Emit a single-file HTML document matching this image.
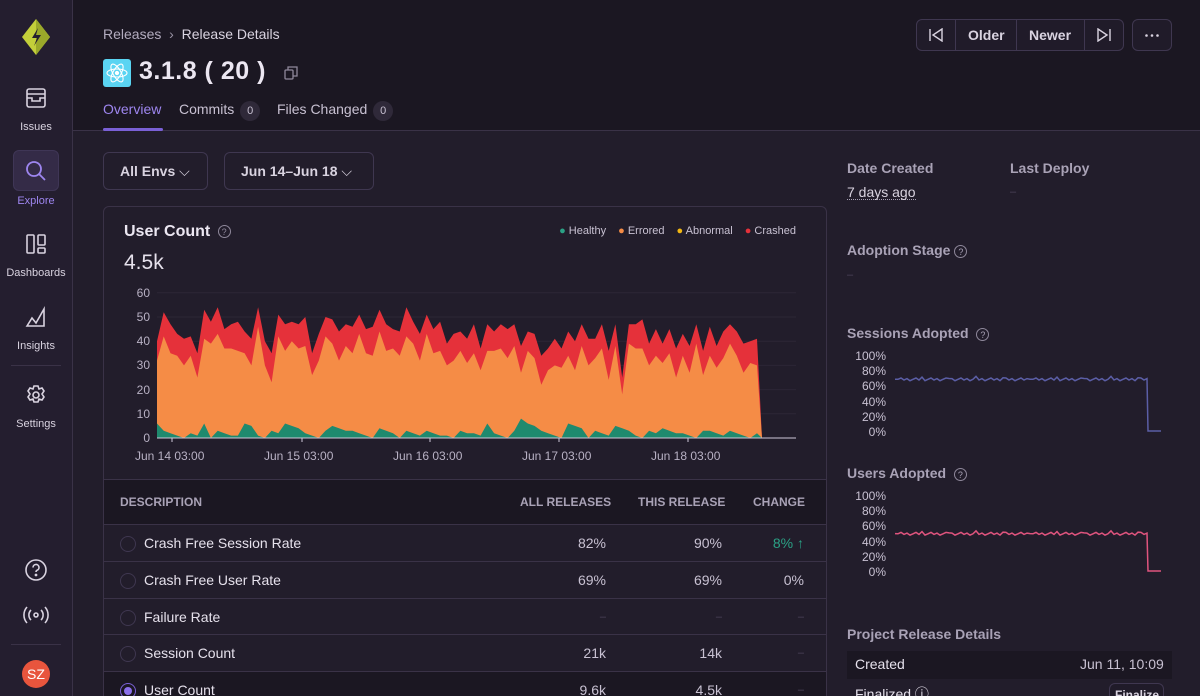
<!DOCTYPE html>
<html><head><meta charset="utf-8">
<style>
*{box-sizing:border-box;margin:0;padding:0}
html,body{width:1200px;height:696px;overflow:hidden}
body{background:#221d2b;font-family:"Liberation Sans",sans-serif;color:#e6e1ec;position:relative}
.sb{position:absolute;left:0;top:0;width:73px;height:696px;background:#241e2f;border-right:1px solid #3a3247}
.ni{position:absolute;left:0;width:72px;text-align:center;font-size:11px;color:#d9d3e0}
.ni svg{display:block;margin:0 auto 12px}
.hdr{position:absolute;left:73px;top:0;right:0;height:131px;background:#1b1722;border-bottom:1px solid #3a3247}
.abs{position:absolute}
.btn{position:absolute;border:1px solid #3f3750;border-radius:6px;background:#201b29}
.card{position:absolute;left:103px;top:206px;width:724px;height:500px;border:1px solid #3a3247;border-radius:6px;background:#221d2b;overflow:hidden}
.lbl{font-size:14px;font-weight:bold;color:#a9a2b6}
.row{position:absolute;left:0;width:722px;height:37px;border-top:1px solid #3a3247;font-size:14px}
.row .d{position:absolute;left:40px;top:10px;color:#e6e1ec}
.row .c{position:absolute;left:16px;top:11px;width:16px;height:16px;border:1px solid #3f3750;border-radius:50%}
.row .v{position:absolute;top:10px;text-align:right;color:#c8c1d2}
.row .dash{color:#4c445a;font-size:11px;top:12px}
.yl{position:absolute;font-size:12px;color:#b8b1c4;text-align:right;width:40px}
.lg{margin-left:12px}
</style></head><body>
<div class="sb">
 <svg class="abs" style="left:20px;top:18px" width="32" height="38" viewBox="0 0 32 38"><path d="M16 1 L30 19 L16 37 L2 19Z" fill="#c3cf3a"/><path d="M16 1 L30 19 L16 37Z" fill="#9aa82a"/><path d="M18 10 L12 20 L17 20 L14 28 L21 17 L16 17 Z" fill="#241e2f"/></svg>
 <div class="ni" style="top:87px"><svg width="22" height="22" viewBox="0 0 22 22" fill="none" stroke="#d9d3e0" stroke-width="1.6"><rect x="2" y="2" width="18" height="18" rx="2"/><path d="M2 7h18M2 11h5v3h8v-3h5"/></svg>Issues</div>
 <div class="abs" style="left:13px;top:150px;width:46px;height:41px;background:#342b47;border-radius:6px;border:1px solid #3f3656"></div>
 <div class="abs" style="left:0;top:160px;width:72px"><svg style="display:block;margin:0 auto" width="22" height="22" viewBox="0 0 22 22" fill="none" stroke="#9e86f0" stroke-width="1.8"><circle cx="9" cy="9" r="7"/><path d="M14 14l6 6"/></svg></div>
 <div class="ni" style="top:195px;color:#9e86f0">Explore</div>
 <div class="ni" style="top:233px"><svg width="22" height="22" viewBox="0 0 22 22" fill="none" stroke="#d9d3e0" stroke-width="1.6"><rect x="2" y="2" width="7" height="18" rx="1"/><rect x="13" y="2" width="7" height="10" rx="1"/><rect x="13" y="15" width="7" height="5" rx="1"/></svg>Dashboards</div>
 <div class="ni" style="top:306px"><svg width="22" height="22" viewBox="0 0 22 22" fill="none" stroke="#d9d3e0" stroke-width="1.6"><path d="M2 20l5-8 4 5 8-14v17z"/></svg>Insights</div>
 <div class="abs" style="left:11px;top:365px;width:50px;height:1px;background:#3a3247"></div>
 <div class="ni" style="top:384px"><svg width="22" height="22" viewBox="0 0 22 22" fill="none" stroke="#d9d3e0" stroke-width="1.6"><circle cx="11" cy="11" r="3"/><path d="M9 2h4l1 3 3-1 2 3-2 3 2 3-2 3-3-1-1 3H9l-1-3-3 1-2-3 2-3-2-3 2-3 3 1z"/></svg>Settings</div>
 <svg class="abs" style="left:24px;top:558px" width="24" height="24" viewBox="0 0 24 24" fill="none" stroke="#d9d3e0" stroke-width="1.6"><circle cx="12" cy="12" r="10"/><path d="M9 9.5a3 3 0 1 1 4 2.8c-.8.4-1 1-1 1.7"/><circle cx="12" cy="17" r=".6" fill="#d9d3e0"/></svg>
 <svg class="abs" style="left:23px;top:604px" width="26" height="22" viewBox="0 0 26 22" fill="none" stroke="#d9d3e0" stroke-width="1.6"><circle cx="13" cy="11" r="2"/><path d="M8 6a7 7 0 0 0 0 10M18 6a7 7 0 0 1 0 10M4 3a12 12 0 0 0 0 16M22 3a12 12 0 0 1 0 16"/></svg>
 <div class="abs" style="left:11px;top:644px;width:50px;height:1px;background:#3a3247"></div>
 <div class="abs" style="left:22px;top:660px;width:28px;height:28px;border-radius:50%;background:#e8553d;color:#fff;font-size:14px;text-align:center;line-height:28px">SZ</div>
</div>
<div class="hdr"></div>
<div class="abs" style="left:103px;top:26px;font-size:14px;color:#b3acbf">Releases &nbsp;<span style="color:#9a93a5">›</span>&nbsp; <span style="color:#d9d3e0">Release Details</span></div>
<div class="abs" style="left:103px;top:59px;width:28px;height:28px;background:#5ad4f2;border-radius:3px"><svg width="28" height="28" viewBox="0 0 28 28" fill="none" stroke="#fff" stroke-width="1.1"><ellipse cx="14" cy="14" rx="10" ry="4"/><ellipse cx="14" cy="14" rx="10" ry="4" transform="rotate(60 14 14)"/><ellipse cx="14" cy="14" rx="10" ry="4" transform="rotate(-60 14 14)"/><circle cx="14" cy="14" r="1.6" fill="#fff"/></svg></div>
<div class="abs" style="left:139px;top:57px;font-size:25px;font-weight:bold;color:#ece7f2;letter-spacing:.5px">3.1.8 ( 20 )</div>
<svg class="abs" style="left:284px;top:66px" width="14" height="14" viewBox="0 0 14 14" fill="none" stroke="#8f889b" stroke-width="1.3"><rect x="1" y="4" width="8" height="9" rx="1"/><path d="M4 4V1h9v9h-4"/></svg>
<div class="abs" style="left:103px;top:101px;font-size:14px;color:#9e86f0">Overview</div>
<div class="abs" style="left:103px;top:128px;width:60px;height:3px;background:#7a60d6;border-radius:2px"></div>
<div class="abs" style="left:179px;top:101px;font-size:14px;color:#c8c1d2">Commits <span style="display:inline-block;width:20px;height:20px;border-radius:10px;background:#2f2939;text-align:center;font-size:11px;line-height:20px;margin-left:2px">0</span></div>
<div class="abs" style="left:277px;top:101px;font-size:14px;color:#c8c1d2">Files Changed <span style="display:inline-block;width:20px;height:20px;border-radius:10px;background:#2f2939;text-align:center;font-size:11px;line-height:20px;margin-left:2px">0</span></div>
<div class="btn" style="left:916px;top:19px;width:208px;height:32px"></div>
<div class="abs" style="left:955px;top:20px;width:1px;height:30px;background:#3f3750"></div>
<div class="abs" style="left:1016px;top:20px;width:1px;height:30px;background:#3f3750"></div>
<div class="abs" style="left:1084px;top:20px;width:1px;height:30px;background:#3f3750"></div>
<svg class="abs" style="left:928px;top:28px" width="16" height="14" viewBox="0 0 16 14" fill="none" stroke="#d9d3e0" stroke-width="1.4"><path d="M2 1v12M14 1L5 7l9 6z"/></svg>
<div class="abs" style="left:968px;top:27px;font-size:14px;font-weight:bold;color:#d9d3e0">Older</div>
<div class="abs" style="left:1029px;top:27px;font-size:14px;font-weight:bold;color:#d9d3e0">Newer</div>
<svg class="abs" style="left:1096px;top:28px" width="16" height="14" viewBox="0 0 16 14" fill="none" stroke="#d9d3e0" stroke-width="1.4"><path d="M14 1v12M2 1l9 6-9 6z"/></svg>
<div class="btn" style="left:1132px;top:19px;width:40px;height:32px"><svg style="display:block;margin:14px auto 0" width="14" height="3" viewBox="0 0 14 3" fill="#d9d3e0"><circle cx="1.5" cy="1.5" r="1.3"/><circle cx="7" cy="1.5" r="1.3"/><circle cx="12.5" cy="1.5" r="1.3"/></svg></div>

<div class="btn" style="left:103px;top:152px;width:105px;height:38px;font-size:14px;font-weight:bold;color:#d9d3e0;padding:10px 0 0 16px;background:#221d2b">All Envs <span style="font-weight:normal">⌵</span></div>
<div class="btn" style="left:224px;top:152px;width:150px;height:38px;font-size:14px;font-weight:bold;color:#d9d3e0;padding:10px 0 0 16px;background:#221d2b">Jun 14–Jun 18 <span style="font-weight:normal">⌵</span></div>

<div class="card">
 <div class="abs" style="left:20px;top:16px;font-size:16px;font-weight:bold;color:#ece7f2">User Count <span style="display:inline-block;width:13px;height:13px;border:1px solid #8f889b;border-radius:50%;font-size:9px;color:#8f889b;text-align:center;line-height:12px;font-weight:normal;vertical-align:1px;margin-left:3px">?</span></div>
 <div class="abs" style="left:20px;top:44px;font-size:21px;color:#e6e1ec">4.5k</div>
 <div class="abs" style="right:30px;top:18px;font-size:11px;color:#c8c1d2;white-space:nowrap">
  <span style="color:#2ba185">●</span> Healthy<span class="lg" style="color:#f58c46">●</span> Errored<span class="lg" style="color:#f2b712">●</span> Abnormal<span class="lg" style="color:#e5313a">●</span> Crashed</div>
 <div class="abs" style="left:0;top:272px;width:722px;height:46px;background:#1b1722;border-top:1px solid #3a3247"></div>
 <div class="abs" style="left:16px;top:288px;font-size:12px;font-weight:bold;color:#a9a2b6">DESCRIPTION</div>
 <div class="abs" style="left:416px;top:288px;font-size:12px;font-weight:bold;color:#a9a2b6">ALL RELEASES</div>
 <div class="abs" style="left:534px;top:288px;font-size:12px;font-weight:bold;color:#a9a2b6">THIS RELEASE</div>
 <div class="abs" style="left:649px;top:288px;font-size:12px;font-weight:bold;color:#a9a2b6">CHANGE</div>
 <div class="row" style="top:317px"><div class="c"></div><div class="d">Crash Free Session Rate</div><div class="v" style="left:442px;width:60px">82%</div><div class="v" style="left:558px;width:60px">90%</div><div class="v" style="left:640px;width:60px;color:#2ba185">8% ↑</div></div>
 <div class="row" style="top:354px"><div class="c"></div><div class="d">Crash Free User Rate</div><div class="v" style="left:442px;width:60px">69%</div><div class="v" style="left:558px;width:60px">69%</div><div class="v" style="left:640px;width:60px">0%</div></div>
 <div class="row" style="top:391px"><div class="c"></div><div class="d">Failure Rate</div><div class="v dash" style="left:442px;width:60px">–</div><div class="v dash" style="left:558px;width:60px">–</div><div class="v dash" style="left:640px;width:60px">–</div></div>
 <div class="row" style="top:427px"><div class="c"></div><div class="d">Session Count</div><div class="v" style="left:442px;width:60px">21k</div><div class="v" style="left:558px;width:60px">14k</div><div class="v dash" style="left:640px;width:60px">–</div></div>
 <div class="row" style="top:464px;background:#1b1722"><div class="c" style="border-color:#7a60d6"><div style="margin:3px;width:8px;height:8px;border-radius:50%;background:#8b70ea"></div></div><div class="d">User Count</div><div class="v" style="left:442px;width:60px">9.6k</div><div class="v" style="left:558px;width:60px">4.5k</div><div class="v dash" style="left:640px;width:60px">–</div></div>
</div>

<div class="yl" style="left:110px;top:286px">60</div>
<div class="yl" style="left:110px;top:310px">50</div>
<div class="yl" style="left:110px;top:334px">40</div>
<div class="yl" style="left:110px;top:358px">30</div>
<div class="yl" style="left:110px;top:383px">20</div>
<div class="yl" style="left:110px;top:407px">10</div>
<div class="yl" style="left:110px;top:431px">0</div>
<svg id="ch" class="abs" style="left:0;top:0" width="1200" height="696"></svg>
<div class="abs" style="left:135px;top:449px;font-size:12px;color:#b8b1c4;white-space:nowrap">Jun 14 03:00</div>
<div class="abs" style="left:264px;top:449px;font-size:12px;color:#b8b1c4">Jun 15 03:00</div>
<div class="abs" style="left:393px;top:449px;font-size:12px;color:#b8b1c4">Jun 16 03:00</div>
<div class="abs" style="left:522px;top:449px;font-size:12px;color:#b8b1c4">Jun 17 03:00</div>
<div class="abs" style="left:651px;top:449px;font-size:12px;color:#b8b1c4">Jun 18 03:00</div>

<div class="abs lbl" style="left:847px;top:160px">Date Created</div>
<div class="abs lbl" style="left:1010px;top:160px">Last Deploy</div>
<div class="abs" style="left:847px;top:185px;font-size:14px;color:#d9d3e0;border-bottom:1px dotted #a9a2b6;line-height:14px">7 days ago</div>
<div class="abs" style="left:1010px;top:186px;font-size:11px;color:#4c445a">–</div>
<div class="abs lbl" style="left:847px;top:242px">Adoption Stage <span style="display:inline-block;width:13px;height:13px;border:1px solid #8f889b;border-radius:50%;font-size:9px;text-align:center;line-height:12px;font-weight:normal">?</span></div>
<div class="abs" style="left:847px;top:269px;font-size:11px;color:#4c445a">–</div>
<div class="abs lbl" style="left:847px;top:325px">Sessions Adopted &nbsp;<span style="display:inline-block;width:13px;height:13px;border:1px solid #8f889b;border-radius:50%;font-size:9px;text-align:center;line-height:12px;font-weight:normal">?</span></div>
<div class="abs lbl" style="left:847px;top:465px">Users Adopted &nbsp;<span style="display:inline-block;width:13px;height:13px;border:1px solid #8f889b;border-radius:50%;font-size:9px;text-align:center;line-height:12px;font-weight:normal">?</span></div>
<div class="abs" style="left:846px;top:349px;width:40px;font-size:12px;color:#c8c1d2;text-align:right;line-height:15.2px">100%<br>80%<br>60%<br>40%<br>20%<br>0%</div>
<div class="abs" style="left:846px;top:489px;width:40px;font-size:12px;color:#c8c1d2;text-align:right;line-height:15.2px">100%<br>80%<br>60%<br>40%<br>20%<br>0%</div>
<div class="abs lbl" style="left:847px;top:626px">Project Release Details</div>
<div class="abs" style="left:847px;top:651px;width:325px;height:28px;background:#1b1722"></div>
<div class="abs" style="left:855px;top:656px;font-size:14px;color:#e6e1ec">Created</div>
<div class="abs" style="left:1080px;top:656px;font-size:14px;color:#c8c1d2">Jun 11, 10:09</div>
<div class="abs" style="left:855px;top:684px;font-size:14px;color:#e6e1ec">Finalized ⓘ</div>
<div class="btn" style="left:1109px;top:683px;width:55px;height:24px;font-size:12px;font-weight:bold;color:#d9d3e0;padding:4px 0 0 5px">Finalize</div>

<script>
var R=[40,52,47,43,41,42,35,53,48,54,45,47,48,44,41,54,40,35,51,47,48,47,50,35,43,50,49,44,47,46,51,45,46,53,47,45,44,54,48,43,51,45,48,39,43,44,41,47,37,47,44,47,45,47,38,44,43,34,37,41,37,44,40,47,41,41,47,36,47,25,47,47,49,39,45,39,45,37,43,38,47,36,46,38,44,47,44,39,40,41];
var n=R.length,x0=157,x1=757,dx=(x1-x0)/(n-1),s=2.42,b=438,O=[],G=[];
for(var i=0;i<n;i++){var r=R[i];O.push(Math.max(r-8-((i*7)%5),15));G.push(((i*13)%7)<3?((i*5)%6)+1:((i*3)%4));}
O[69]=18;G[0]=6;G[54]=8;G[96]=7;
function poly(a){var p=x0+','+b+' ';for(var i=0;i<n;i++)p+=(x0+i*dx).toFixed(1)+','+(b-a[i]*s).toFixed(1)+' ';return p+'762,'+b;}
var h='';
for(var k=0;k<=6;k++){if(k>0)h+='<line x1="157" x2="796" y1="'+(b-k*10*s)+'" y2="'+(b-k*10*s)+'" stroke="#2c2636"/>';}
h+='<polygon points="'+poly(R)+'" fill="#e5313a"/>';
h+='<polygon points="'+poly(O)+'" fill="#f58c46"/>';
h+='<polygon points="'+poly(G)+'" fill="#1f8a6e"/>';
h+='<line x1="157" x2="796" y1="438" y2="438" stroke="#cfc8d8"/>';
[172,302,430,559,688].forEach(function(x){h+='<line x1="'+x+'" x2="'+x+'" y1="438" y2="442" stroke="#cfc8d8"/>';});
function ad(y100,y0,v,c){var p='';for(var i=0;i<=84;i++){var x=895+i*3;var vv=v+((i*7)%5-2)*0.9+((i%9)==0?2:0);p+=x+','+(y0-(y0-y100)*vv/100).toFixed(1)+' ';}p+='1148,'+y0+' 1161,'+y0;return '<polyline points="'+p+'" fill="none" stroke="'+c+'" stroke-width="1.5"/>';}
h+=ad(355,431,68,'#5b5ea6');h+=ad(495,571,49,'#e0547e');
document.getElementById('ch').innerHTML=h;
</script>
</body></html>
